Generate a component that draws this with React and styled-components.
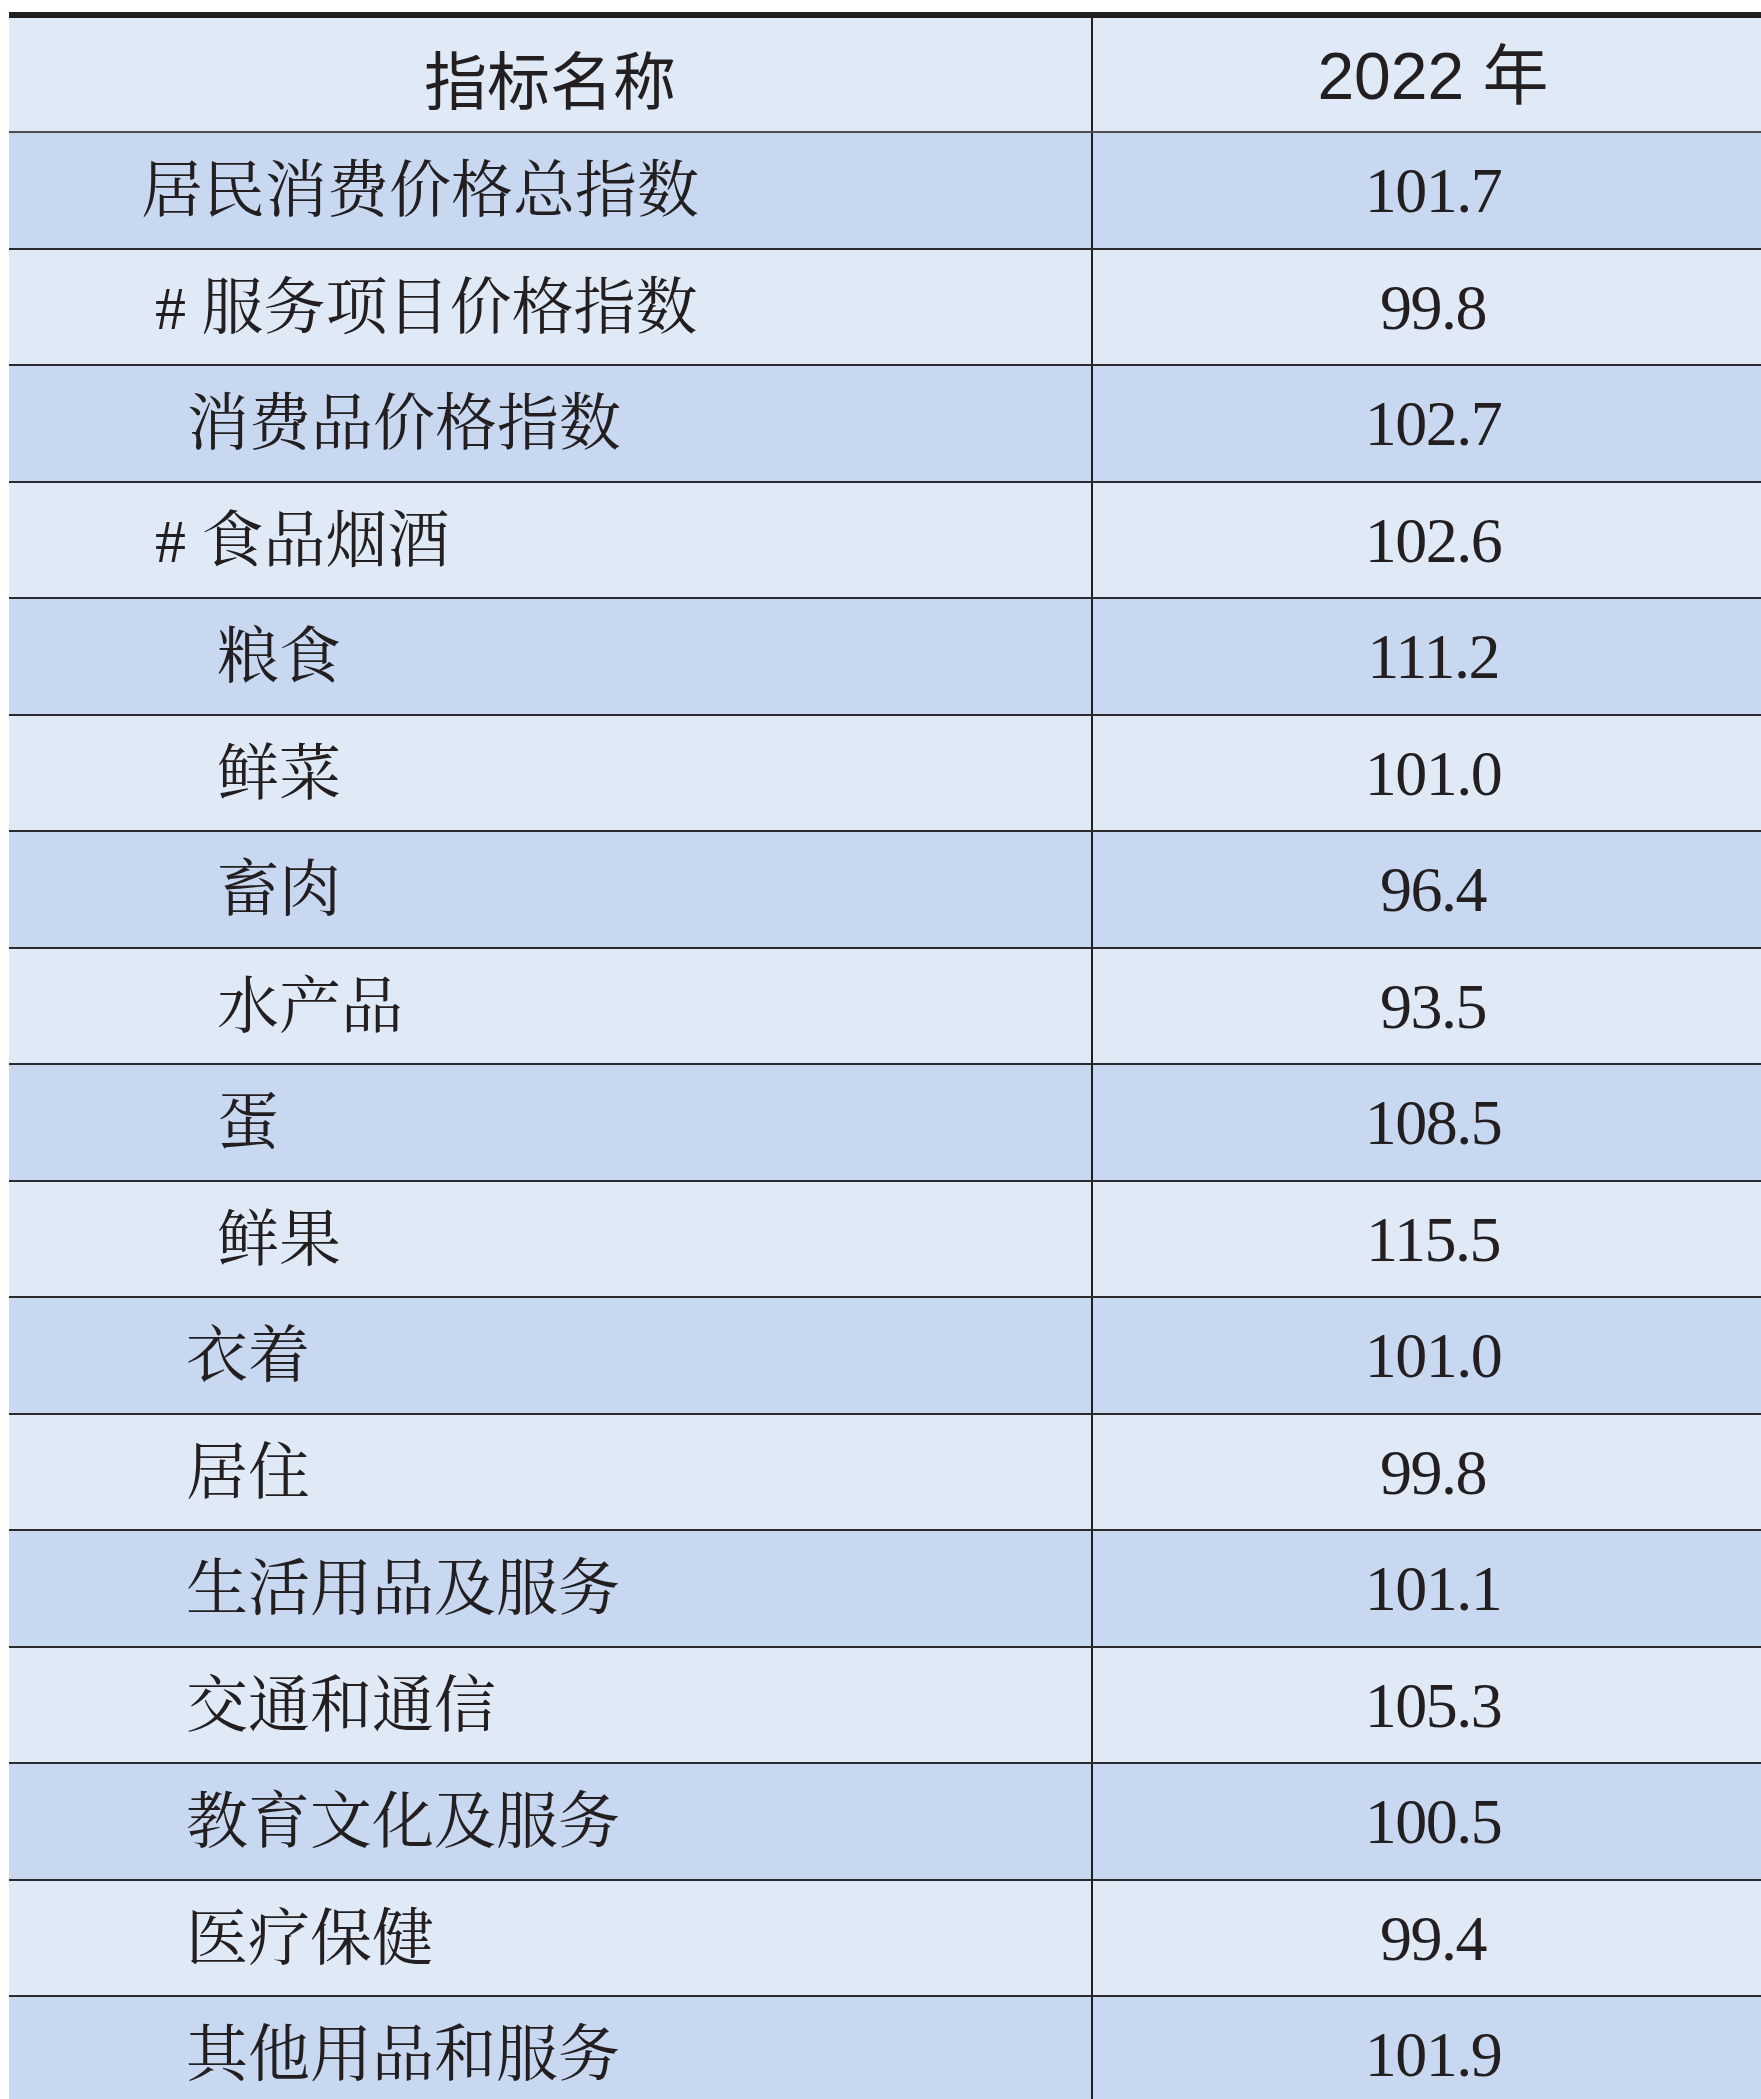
import styled, { createGlobalStyle } from "styled-components";

const GlobalStyle = createGlobalStyle`
  html, body {
    margin: 0;
    padding: 0;
    background: #ffffff;
  }
  body {
    overflow: hidden;
  }
`;

const rows = [
  { name: "居民消费价格总指数", value: "101.7", indent: 141 },
  { name: "# 服务项目价格指数", value: "99.8", indent: 155 },
  { name: "消费品价格指数", value: "102.7", indent: 187 },
  { name: "# 食品烟酒", value: "102.6", indent: 155 },
  { name: "粮食", value: "111.2", indent: 217 },
  { name: "鲜菜", value: "101.0", indent: 217 },
  { name: "畜肉", value: "96.4", indent: 217 },
  { name: "水产品", value: "93.5", indent: 217 },
  { name: "蛋", value: "108.5", indent: 217 },
  { name: "鲜果", value: "115.5", indent: 217 },
  { name: "衣着", value: "101.0", indent: 186 },
  { name: "居住", value: "99.8", indent: 186 },
  { name: "生活用品及服务", value: "101.1", indent: 186 },
  { name: "交通和通信", value: "105.3", indent: 186 },
  { name: "教育文化及服务", value: "100.5", indent: 186 },
  { name: "医疗保健", value: "99.4", indent: 186 },
  { name: "其他用品和服务", value: "101.9", indent: 186 },
];

const Page = styled.div`
  padding: 12px 0 0 9px;
`;

const Table = styled.div`
  width: 1752px;
  border-top: 6px solid #231f20;
  color: #231f20;
`;

const Row = styled.div`
  display: grid;
  grid-template-columns: 1084px 1fr;
  height: ${({ $header }) => ($header ? "115px" : "116.5px")};
  box-sizing: border-box;
  border-bottom: 2px solid ${({ $header }) => ($header ? "#4d4d4f" : "#2b2a2c")};
  background: ${({ $shade }) => ($shade ? "#c7d8f0" : "#e0eaf7")};
`;

const Cell = styled.div`
  display: flex;
  align-items: center;
  box-sizing: border-box;
  height: 100%;
  line-height: 1;
  white-space: pre;
`;

const NameCell = styled(Cell)`
  border-right: 2px solid #231f20;
  padding-left: ${({ $indent }) => $indent - 9}px;
  padding-top: 2px;
  font-family: "Liberation Serif", "Noto Serif CJK SC", "Noto Sans CJK SC", serif;
  font-size: 62px;
`;

const ValueCell = styled(Cell)`
  justify-content: center;
  padding-left: 12px;
  padding-top: 2px;
  font-family: "Liberation Serif", "Noto Sans CJK SC", serif;
  font-size: 64px;
  letter-spacing: -1.5px;
`;

const HeadName = styled(Cell)`
  justify-content: center;
  padding-top: 3px;
  border-right: 2px solid #231f20;
  font-family: "Noto Sans CJK SC", sans-serif;
  font-size: 63px;
`;

const HeadYear = styled(Cell)`
  justify-content: center;
  padding-left: 12px;
  padding-top: 3px;
  font-family: "Liberation Sans", "Noto Sans CJK SC", sans-serif;
  font-size: 66px;
`;

export default function App() {
  return (
    <Page>
      <GlobalStyle />
      <Table>
        <Row $header>
          <HeadName>指标名称</HeadName>
          <HeadYear>2022 年</HeadYear>
        </Row>
        {rows.map((row, i) => (
          <Row key={row.name} $shade={i % 2 === 0}>
            <NameCell $indent={row.indent}>{row.name}</NameCell>
            <ValueCell>{row.value}</ValueCell>
          </Row>
        ))}
      </Table>
    </Page>
  );
}
